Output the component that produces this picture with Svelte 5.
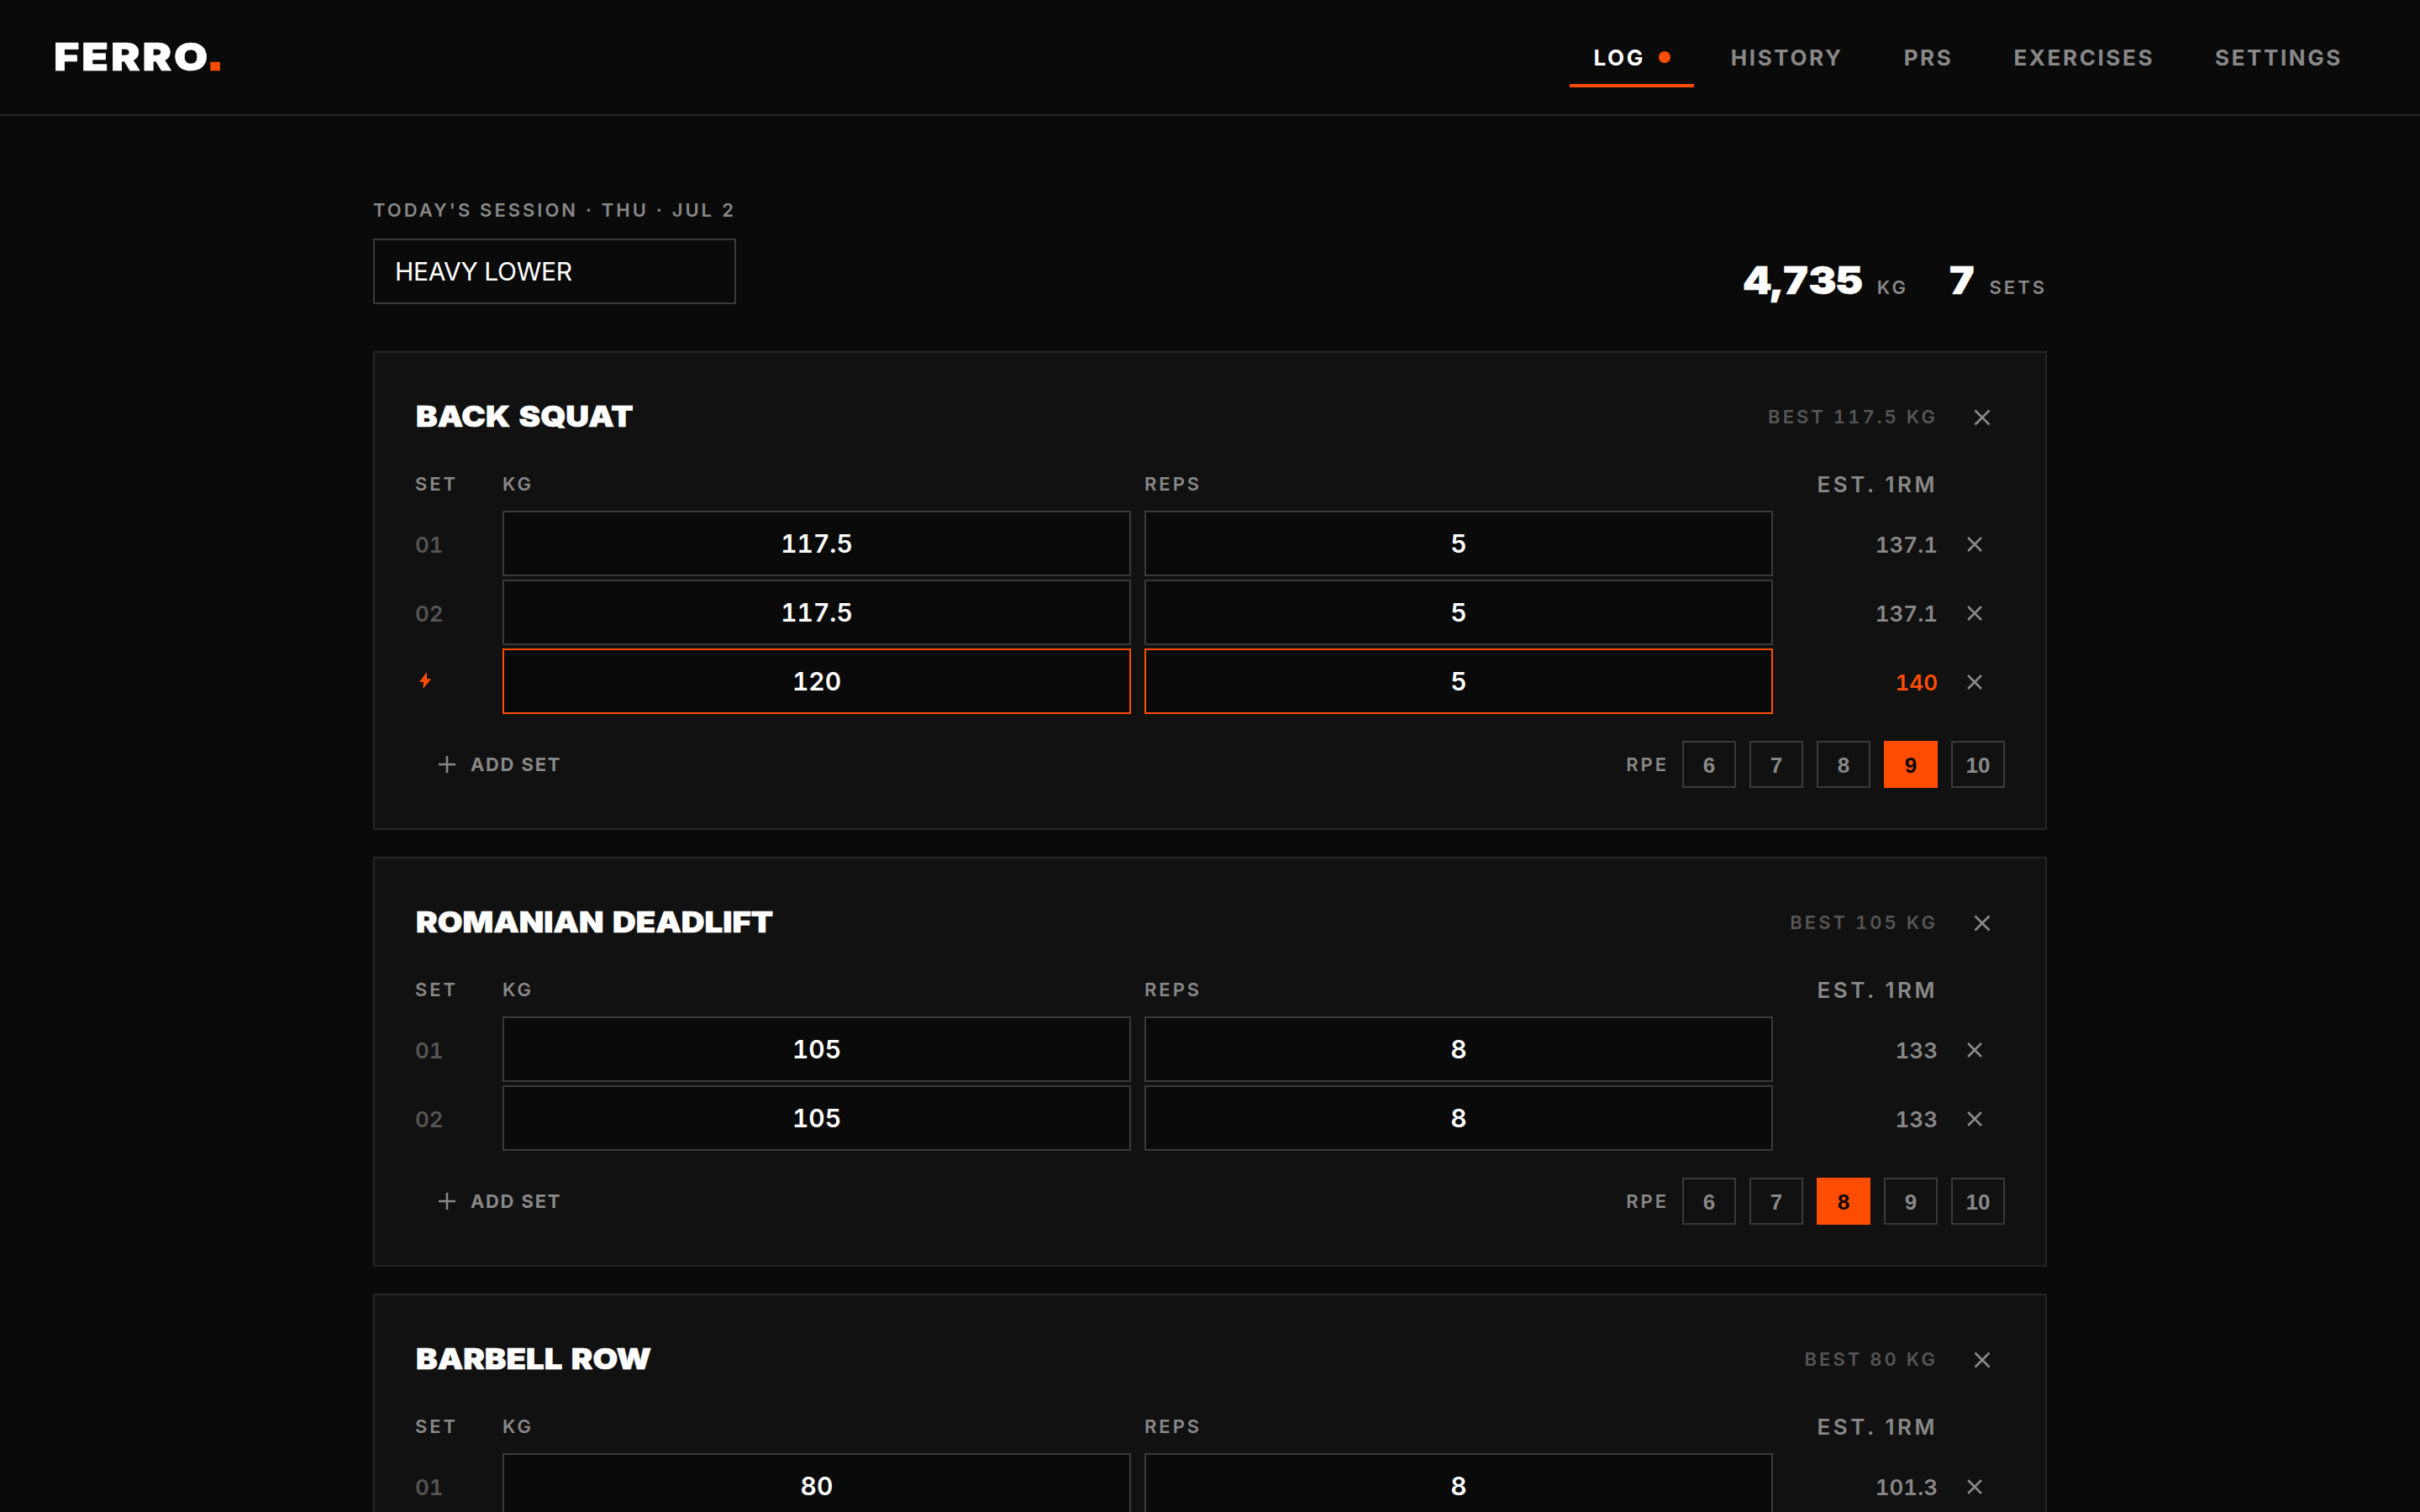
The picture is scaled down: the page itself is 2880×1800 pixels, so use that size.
<script lang="ts">
	type WorkSet = { kg: string; reps: string; est: string; pr?: boolean };
	type Exercise = { name: string; best: string; rpe: number; sets: WorkSet[] };

	const tabs = ['LOG', 'HISTORY', 'PRS', 'EXERCISES', 'SETTINGS'];
	const rpeScale = [6, 7, 8, 9, 10];

	let activeTab = 'LOG';
	let sessionName = 'HEAVY LOWER';

	let exercises: Exercise[] = [
		{
			name: 'BACK SQUAT',
			best: '117.5',
			rpe: 9,
			sets: [
				{ kg: '117.5', reps: '5', est: '137.1' },
				{ kg: '117.5', reps: '5', est: '137.1' },
				{ kg: '120', reps: '5', est: '140', pr: true }
			]
		},
		{
			name: 'ROMANIAN DEADLIFT',
			best: '105',
			rpe: 8,
			sets: [
				{ kg: '105', reps: '8', est: '133' },
				{ kg: '105', reps: '8', est: '133' }
			]
		},
		{
			name: 'BARBELL ROW',
			best: '80',
			rpe: 8,
			sets: [{ kg: '80', reps: '8', est: '101.3' }]
		}
	];

	function addSet(ex: Exercise) {
		const last = ex.sets[ex.sets.length - 1];
		ex.sets = [...ex.sets, { ...last, pr: false }];
		exercises = exercises;
	}

	function removeSet(ex: Exercise, i: number) {
		ex.sets = ex.sets.filter((_, n) => n !== i);
		exercises = exercises;
	}
</script>

<div class="app">
	<header>
		<div class="logo">FERRO<span>.</span></div>
		<nav>
			{#each tabs as tab}
				<button class="tab" class:active={tab === activeTab} on:click={() => (activeTab = tab)}>
					{tab}
					{#if tab === 'LOG'}<i class="dot"></i>{/if}
				</button>
			{/each}
		</nav>
	</header>

	<main>
		<section class="session">
			<div class="session-name">
				<span class="label">TODAY'S SESSION · THU · JUL 2</span>
				<input type="text" size="1" aria-label="Session name" bind:value={sessionName} />
			</div>
			<div class="totals">
				<div class="total"><b>4,735</b><span class="label">KG</span></div>
				<div class="total"><b>7</b><span class="label">SETS</span></div>
			</div>
		</section>

		{#each exercises as ex}
			<article class="card">
				<div class="card-head">
					<h2>{ex.name}</h2>
					<span class="label best">BEST {ex.best} KG</span>
					<button class="icon" aria-label="Remove exercise">
						<svg width="20" height="20" viewBox="0 0 20 20"><path d="M1.500 1.500l17 17M18.500 1.500l-17 17" /></svg>
					</button>
				</div>

				<div class="row row-head">
					<span class="label">SET</span>
					<span class="label">KG</span>
					<span class="label">REPS</span>
					<span class="label est-label">EST. 1RM</span>
				</div>

				<div class="sets">
					{#each ex.sets as set, i}
						<div class="row" class:pr={set.pr}>
							<span class="num">
								{#if set.pr}
									<svg class="bolt" width="16" height="20" viewBox="0 0 16 20"><path d="M10 0L1 12h5L5.500 20 15 8.200H10z" /></svg>
								{:else}
									{String(i + 1).padStart(2, '0')}
								{/if}
							</span>
							<input type="text" inputmode="decimal" aria-label="Kg" bind:value={set.kg} />
							<input type="text" inputmode="numeric" aria-label="Reps" bind:value={set.reps} />
							<span class="est">{set.est}</span>
							<button class="icon" aria-label="Remove set" on:click={() => removeSet(ex, i)}>
								<svg width="18" height="18" viewBox="0 0 18 18"><path d="M1 1l16 16M17 1L1 17" /></svg>
							</button>
						</div>
					{/each}
				</div>

				<div class="card-foot">
					<button class="add" on:click={() => addSet(ex)}>
						<svg width="20" height="20" viewBox="0 0 20 20"><path d="M10 0v20M0 10h20" /></svg>
						ADD SET
					</button>
					<div class="rpe">
						<span class="label">RPE</span>
						{#each rpeScale as n}
							<button class:selected={ex.rpe === n} on:click={() => (ex.rpe = n)}>{n}</button>
						{/each}
					</div>
				</div>
			</article>
		{/each}
	</main>
</div>

<style>
	:global(body) {
		background: #0a0a0a;
		overflow: hidden;
	}
	.app {
		height: 1800px;
		overflow: hidden;
		color: #fff;
		font-family: Inter, 'Liberation Sans', sans-serif;
		font-variant-numeric: tabular-nums;
	}
	button,
	input {
		box-sizing: border-box;
		margin: 0;
		font: inherit;
		color: inherit;
		border-radius: 0;
		outline: none;
	}
	button {
		padding: 0;
		background: none;
		border: 0;
		cursor: pointer;
	}
	svg {
		display: block;
		fill: none;
		stroke: currentColor;
		stroke-width: 2.6;
	}

	header {
		display: flex;
		align-items: center;
		justify-content: space-between;
		height: 136px;
		padding: 0 64px;
		border-bottom: 2px solid #262626;
	}

	/* display type: a black grotesque, stretched a little wide */
	.logo,
	.total b,
	h2 {
		font-weight: 900;
		-webkit-text-stroke: 0.6px currentColor;
		transform: scaleX(1.13);
		transform-origin: left;
	}
	.logo {
		font-size: 46px;
		line-height: 54px;
		margin-bottom: 2px;
		letter-spacing: 0.055em;
	}
	.logo span {
		margin-left: -4px;
		color: #ff4d00;
		font-family: 'Liberation Sans', sans-serif;
		font-size: 66px;
		font-weight: 700;
		line-height: 0;
		letter-spacing: 0;
	}
	nav {
		display: flex;
		gap: 16px;
	}
	.tab {
		display: flex;
		align-items: center;
		gap: 16px;
		height: 72px;
		padding: 4px 28px 0;
		border-bottom: 4px solid transparent;
		color: #888;
		font-size: 26px;
		font-weight: 700;
		letter-spacing: 0.1em;
	}
	.tab.active {
		border-color: #ff4d00;
		color: #fff;
	}
	.dot {
		width: 14px;
		height: 14px;
		border-radius: 50%;
		background: #ff4d00;
	}

	main {
		width: 1992px;
		margin: 0 auto;
		padding-top: 96px;
	}
	.label {
		color: #888;
		font-size: 22px;
		font-weight: 600;
		line-height: 32px;
		letter-spacing: 0.136em;
	}
	.session {
		display: flex;
		justify-content: space-between;
		align-items: flex-end;
		margin-bottom: 56px;
	}
	.session-name {
		display: flex;
		flex-direction: column;
		gap: 18px;
	}
	input {
		height: 78px;
		min-width: 0;
		width: 100%;
		padding: 0 24px;
		background: #0a0a0a;
		border: 2px solid #3a3a3a;
		font-size: 30px;
	}
	.session-name input {
		letter-spacing: -0.01em;
	}
	.totals {
		display: flex;
		gap: 50px;
	}
	.total {
		display: flex;
		align-items: baseline;
		gap: 17px;
	}
	.total b {
		font-size: 46px;
		line-height: 58px;
		transform: scaleX(1.08);
		transform-origin: right;
	}

	.card {
		margin-bottom: 32px;
		padding: 48px;
		background: #111;
		border: 2px solid #262626;
	}
	.card-head {
		display: flex;
		align-items: center;
		height: 56px;
		margin-bottom: 36px;
	}
	h2 {
		margin: 0 auto 2px 1px;
		font-size: 34px;
	}
	.best {
		margin-right: 26px;
		color: #555;
		letter-spacing: 0.138em;
	}
	.icon {
		display: grid;
		place-items: center;
		width: 56px;
		height: 56px;
		padding-top: 2px;
		color: #888;
	}
	.card-head .icon {
		width: 54px;
	}

	.row {
		display: grid;
		grid-template-columns: 88px 1fr 1fr 180px 64px;
		gap: 16px;
		align-items: center;
	}
	.row-head {
		margin-bottom: 16px;
	}
	.est-label {
		padding-top: 2px;
		font-size: 26px;
		line-height: 30px;
		text-align: right;
		font-variant-numeric: normal;
	}
	.sets {
		display: flex;
		flex-direction: column;
		gap: 4px;
	}
	.row input {
		font-weight: 600;
		text-align: center;
	}
	.num {
		padding-top: 2px;
		color: #555;
		font-size: 26px;
		font-weight: 600;
	}
	.est {
		padding-top: 2px;
		color: #888;
		font-size: 26px;
		font-weight: 600;
		text-align: right;
	}
	.bolt {
		margin: 0 0 4px 4px;
		fill: #ff4d00;
		stroke: none;
	}
	.pr input {
		border-color: #ff4d00;
	}
	.pr .est {
		color: #ff4d00;
	}

	.card-foot {
		display: flex;
		align-items: center;
		justify-content: space-between;
		height: 56px;
		margin-top: 32px;
	}
	.add {
		display: flex;
		align-items: center;
		gap: 18px;
		padding: 0 28px;
		color: #888;
		font-size: 22px;
		font-weight: 700;
		letter-spacing: 0.074em;
	}
	.rpe {
		display: flex;
		align-items: center;
		gap: 16px;
	}
	.rpe button {
		width: 64px;
		height: 56px;
		padding-top: 2px;
		border: 2px solid #3a3a3a;
		color: #888;
		font-family: 'Liberation Sans', Arial, sans-serif;
		font-size: 26px;
		font-weight: 700;
	}
	.rpe button.selected {
		background: #ff4d00;
		border-color: #ff4d00;
		color: #0a0a0a;
	}
</style>
